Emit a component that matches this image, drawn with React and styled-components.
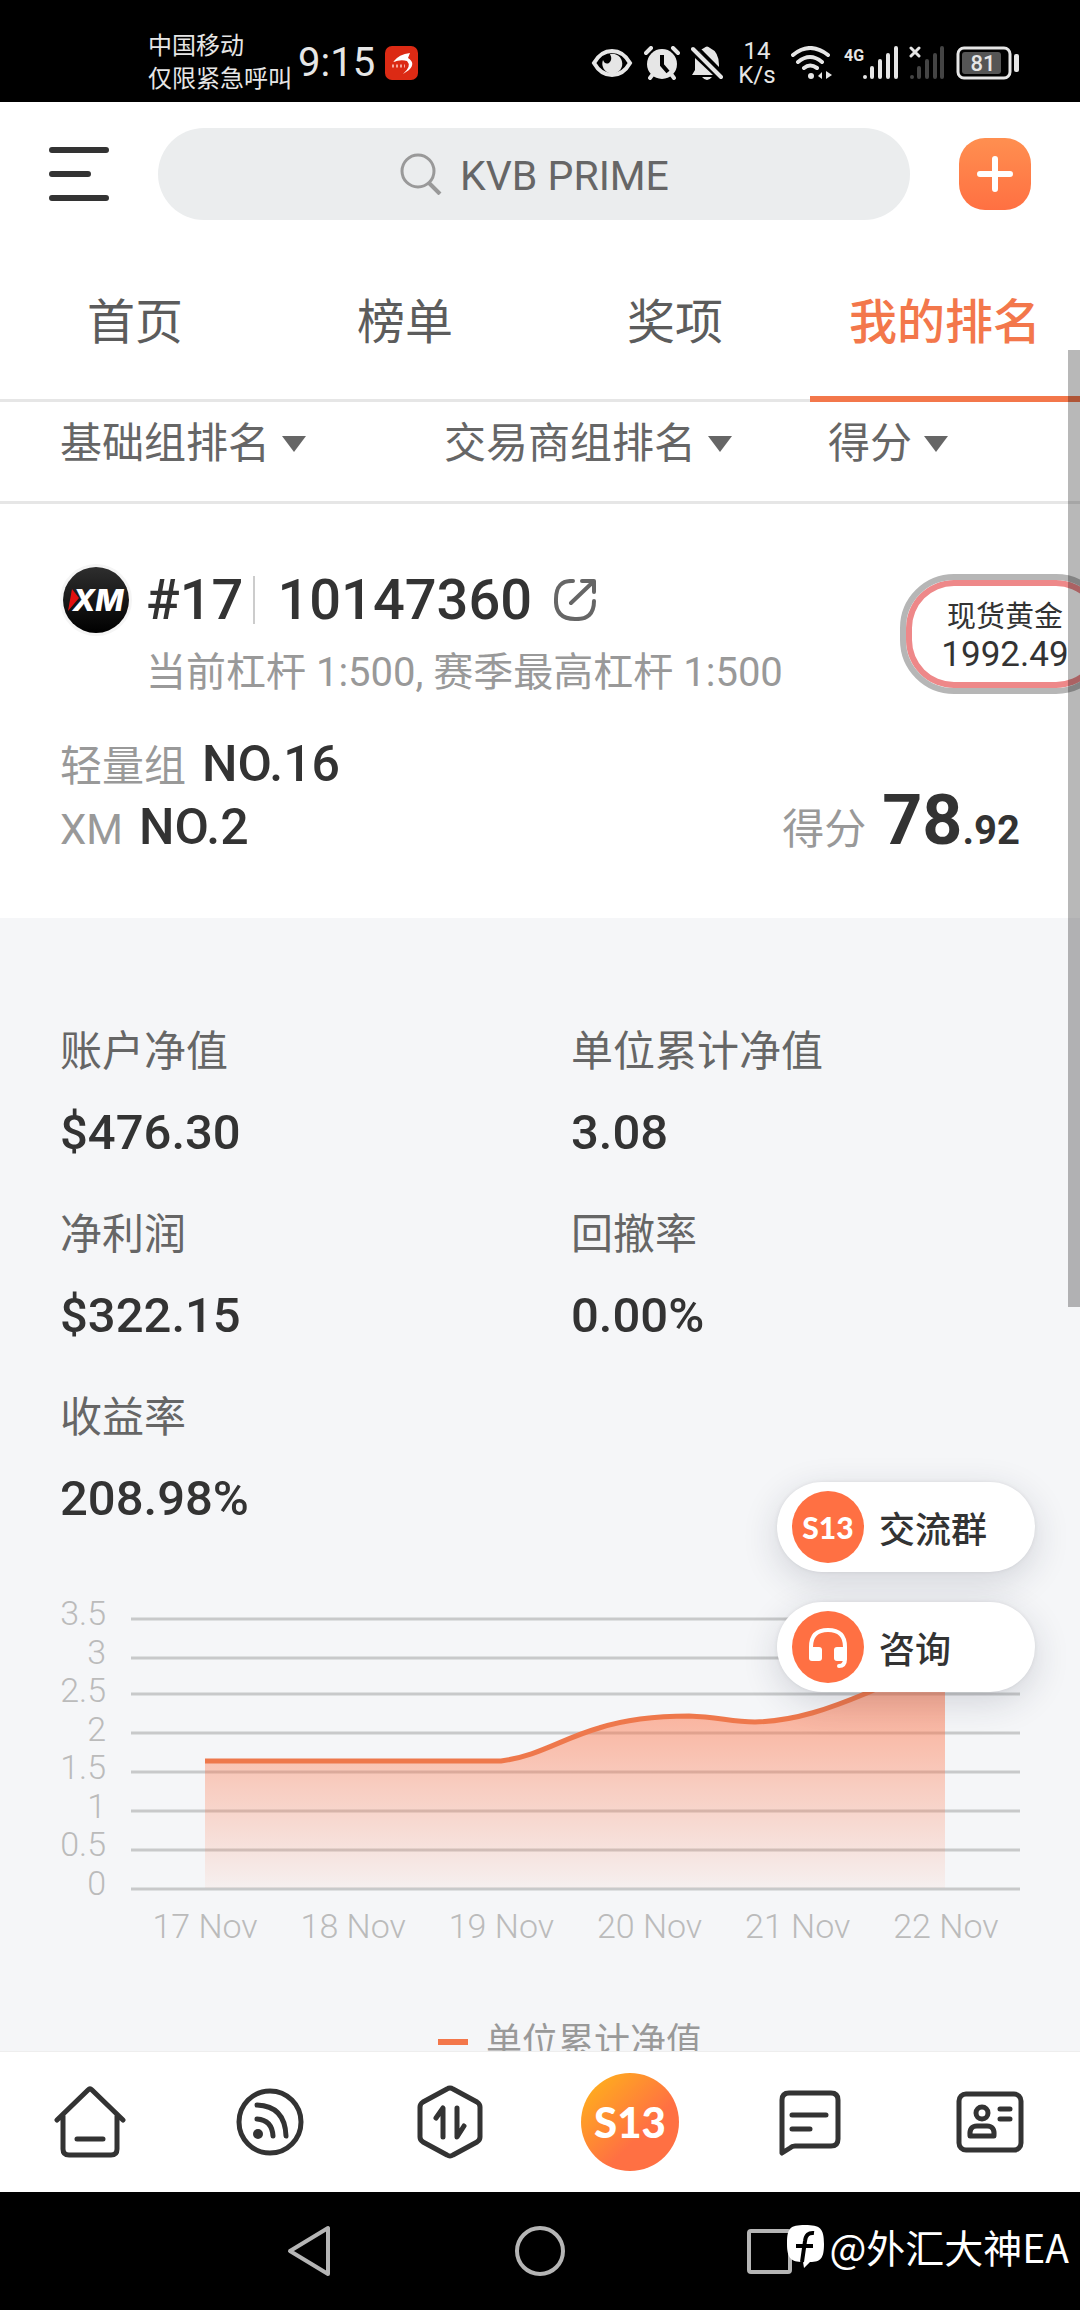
import styled, {createGlobalStyle} from "styled-components";
import {useState} from "react";

const GlobalStyle = createGlobalStyle`
    * {
        box-sizing: border-box;
    }
    body {
        margin: 0;
        background-color: #fff;
        color: #333;
        font-family: Roboto, "Noto Sans CJK SC", sans-serif;
    }
    button, select, input {
        margin: 0;
        padding: 0;
        border: 0;
        outline: 0;
        background: none;
        color: inherit;
        font: inherit;
    }
    svg {
        display: block;
        flex: none;
    }
`

const AppStyle = styled.div`
    position: relative;
    display: flex;
    flex-direction: column;
    height: 100vh;
    overflow: hidden;
`

// status bar of the phone
const StatusBarStyle = styled.div`
    display: flex;
    justify-content: space-between;
    align-items: center;
    height: 102px;
    padding: 24px 60px 0 148px;
    background-color: #000;
    color: #e6e6e6;
`
const StatusGroup = styled.div`
    display: flex;
    align-items: center;
    gap: ${props => props.$gap}px;
`
const Carrier = styled.div`
    font-size: 24px;
    line-height: 33px;
`
const Clock = styled.div`
    font-size: 40px;
    line-height: 40px;
`
const Speed = styled.div`
    width: 38px;
    margin: 0 4px;
    font-size: 24px;
    line-height: 24px;
    text-align: center;
`

// header
const HeaderStyle = styled.header`
    display: flex;
    align-items: center;
    height: 144px;
    padding: 0 49px;
`
const SearchBox = styled.label`
    display: flex;
    flex: 1;
    align-items: center;
    justify-content: center;
    gap: 18px;
    height: 92px;
    margin: 0 49px;
    border-radius: 46px;
    background-color: #ebedee;
`
const SearchInput = styled.input`
    width: 208px;
    padding-top: 4px;
    color: #666;
    font-size: 41px;
    &::placeholder {
        color: #666;
        opacity: 1;
    }
`
const PlusButton = styled.button`
    display: flex;
    align-items: center;
    justify-content: center;
    width: 72px;
    height: 72px;
    border-radius: 26px;
    background: linear-gradient(#ff8f50, #ff7042);
`

const TabsStyle = styled.nav`
    display: grid;
    grid-template-columns: repeat(4, 1fr);
    box-shadow: inset 0 -3px #e6e6e6;
`
const Tab = styled.button`
    height: 156px;
    padding-bottom: 6px;
    border-bottom: 6px solid ${props => props.$active ? "#f3774b" : "transparent"};
    color: ${props => props.$active ? "#f3774b" : "#5c5c5c"};
    font-size: 48px;
    font-weight: ${props => props.$active ? 500 : 400};
`

const FiltersStyle = styled.div`
    display: grid;
    grid-template-columns: 2fr 2fr 1fr;
    padding: 12px 60px 27px;
    border-bottom: 3px solid #e6e6e6;
    color: #666;
`
const FilterStyle = styled.label`
    display: flex;
    align-items: center;
    gap: 10px;
`
const FilterSelect = styled.select`
    appearance: none;
    font-size: 42px;
    line-height: 60px;
`

const MainStyle = styled.main`
    flex: 1;
    min-height: 0;
    overflow: hidden;
    background-color: #f5f6f8;
`

// account card
const CardStyle = styled.section`
    padding: 60px 60px 59px;
    background-color: #fff;
`
const AccountRow = styled.div`
    display: flex;
    align-items: center;
    height: 72px;
    font-size: 56px;
    font-weight: 500;
`
const BrokerLogo = styled.div`
    margin-right: 14px;
    border: 3px solid #f5f5f5;
    border-radius: 50%;
`
const AccountNumber = styled.div`
    margin: 0 22px 0 10px;
    padding-left: 22px;
    border-left: 2px solid #ccc;
    line-height: 48px;
`
const Leverage = styled.div`
    margin: 10px 0 33px 86px;
    color: #999;
    font-size: 40px;
    line-height: 54px;
`
const PlacesRow = styled.div`
    display: flex;
    align-items: last baseline;
    justify-content: space-between;
`
const Place = styled.div`
    display: flex;
    align-items: baseline;
    gap: 16px;
    height: 63px;
    color: #999;
    font-size: 42px;
    line-height: 63px;
`
const PlaceValue = styled.span`
    color: #333;
    font-size: 50px;
    font-weight: 500;
`
const ScoreValue = styled.span`
    color: #333;
    font-size: 40px;
    font-weight: 700;
`
const ScoreWhole = styled.span`
    font-size: 70px;
`

// numbers
const StatsStyle = styled.section`
    display: grid;
    grid-template-columns: 1fr 1fr;
    gap: 42px 62px;
    padding: 104px 60px 0;
`
const Stat = styled.div`
    display: grid;
    gap: 21px;
    line-height: 60px;
`
const StatLabel = styled.div`
    color: #666;
    font-size: 42px;
`
const StatValue = styled.div`
    font-size: 49px;
    font-weight: 500;
`

// chart
const ChartStyle = styled.section`
    display: grid;
    grid-template-columns: 46px 1fr;
    column-gap: 25px;
    padding: 65px 60px 0;
    color: #bbb;
    font-size: 34px;
    font-weight: 300;
    line-height: 38px;
`
const AxisY = styled.div`
    display: flex;
    flex-direction: column;
    justify-content: space-between;
    align-items: flex-end;
    height: 308px;
`
const AxisX = styled.div`
    display: grid;
    grid-column: 2;
    grid-template-columns: repeat(6, 1fr);
    margin-top: 3px;
    text-align: center;
`
const Legend = styled.div`
    display: flex;
    align-items: center;
    justify-content: center;
    gap: 18px;
    padding: 77px 0 0 60px;
    color: #999;
    font-size: 36px;
    line-height: 40px;
`
const LegendMark = styled.span`
    width: 30px;
    height: 6px;
    background-color: #f3774b;
`

// things over the content
const ScrollThumb = styled.div`
    position: absolute;
    top: 350px;
    right: 0;
    width: 12px;
    height: 957px;
    background-color: rgba(0, 0, 0, 0.28);
`
const PriceBadge = styled.div`
    position: absolute;
    top: 574px;
    right: -30px;
    width: 210px;
    height: 120px;
    padding-top: 18px;
    border: 6px solid #b6b6b6;
    border-radius: 54px;
    background-color: #fff;
    box-shadow: inset 0 0 0 6px #ee8889;
    font-size: 29px;
    line-height: 38px;
    text-align: center;
`
const Price = styled.div`
    font-size: 35px;
`
const FloatingStyle = styled.div`
    position: absolute;
    right: 45px;
    bottom: 618px;
    display: grid;
    gap: 30px;
`
const FloatingButton = styled.button`
    display: flex;
    align-items: center;
    gap: 15px;
    width: 258px;
    height: 90px;
    padding-left: 15px;
    border-radius: 45px;
    background-color: #fff;
    box-shadow: 0 10px 36px rgba(30, 40, 60, 0.16), 0 0 4px rgba(0, 0, 0, 0.08);
    font-size: 36px;
    font-weight: 500;
`
const SeasonLogo = styled.span`
    display: flex;
    align-items: center;
    justify-content: center;
    width: ${props => props.$size}px;
    height: ${props => props.$size}px;
    border-radius: 50%;
    background: ${props => props.$gradient ? "linear-gradient(135deg, #ffb31a 5%, #ff7043 62%)" : "#ff7043"};
    color: #fff;
    font-family: Lato, sans-serif;
    font-size: ${props => props.$gradient ? 42 : 30}px;
    font-weight: 900;
`

const BottomNavStyle = styled.nav`
    display: grid;
    grid-template-columns: repeat(6, 1fr);
    height: 141px;
    border-top: 1px solid #eee;
    background-color: #fff;
`
const NavButton = styled.button`
    display: flex;
    align-items: center;
    justify-content: center;
`
const SystemNavStyle = styled.nav`
    position: relative;
    display: flex;
    align-items: center;
    justify-content: center;
    gap: 180px;
    height: 118px;
    background-color: #000;
`
const Watermark = styled.div`
    position: absolute;
    top: 28px;
    right: 11px;
    display: flex;
    align-items: center;
    gap: 5px;
    color: #fff;
    font-family: "Noto Sans CJK SC", sans-serif;
    font-size: 39px;
    line-height: 52px;
`

const tabs = ["首页", "榜单", "奖项", "我的排名"];
const filters = ["基础组排名", "交易商组排名", "得分"];
const stats = [
    {label: "账户净值", value: "$476.30"},
    {label: "单位累计净值", value: "3.08"},
    {label: "净利润", value: "$322.15"},
    {label: "回撤率", value: "0.00%"},
    {label: "收益率", value: "208.98%"},
];
const levels = ["3.5", "3", "2.5", "2", "1.5", "1", "0.5", "0"];
const days = ["17 Nov", "18 Nov", "19 Nov", "20 Nov", "21 Nov", "22 Nov"];
const curve = "M74 167H370C408 162 430 145 468 134C496 125 526 122 558 122C588 123 600 128 624 128C665 127 700 114 736 99C764 87 789 68 814 57";

function StatusIcons() {
    return (
        <>
            <svg width="42" height="34" viewBox="0 0 42 34">
                <path d="M3 17C12 1 30 1 39 17C30 33 12 33 3 17Z" fill="none" stroke="#e6e6e6" strokeWidth="4" />
                <path d="M19 8A10 10 0 1 1 12 14Q14 19 18 17Q22 14 19 8Z" fill="#e6e6e6" />
            </svg>
            <svg width="36" height="34" viewBox="0 0 36 34">
                <circle cx="18" cy="18" r="15" fill="#e6e6e6" />
                <path d="M2 7L7 2M34 7L29 2M6 32L9 28M30 32L27 28" stroke="#e6e6e6" strokeWidth="4" strokeLinecap="round" />
                <path d="M18 9V19L24 26" fill="none" stroke="#000" strokeWidth="4" />
            </svg>
            <svg width="32" height="34" viewBox="0 0 32 34">
                <path d="M1 29L4 24V12L22 29ZM8 5Q11 3 13 2Q16-1 19 2Q28 6 28 19V22ZM11 31H21Q16 37 11 31Z" fill="#e6e6e6" />
                <path d="M2 3L30 31" stroke="#e6e6e6" strokeWidth="4" strokeLinecap="round" />
                <path d="M6 1L32 27" stroke="#000" strokeWidth="3" />
            </svg>
        </>
    );
}

function SignalIcons() {
    return (
        <>
            <svg width="42" height="34" viewBox="0 0 42 34" fill="none" stroke="#e6e6e6" strokeWidth="4" strokeLinecap="round">
                <path d="M2 9Q19-5 37 9M7 16Q19 6 31 16M13 22Q19 17 26 22" />
                <circle cx="20" cy="30" r="3" fill="#e6e6e6" stroke="none" />
                <path d="M31 26V33L27 30ZM35 33V25L41 29Z" fill="#e6e6e6" stroke="none" />
            </svg>
            <svg width="54" height="34" viewBox="0 0 54 34">
                <text x="0" y="15" fill="#e6e6e6" fontSize="16" fontWeight="700">4G</text>
                <path d="M21 31V31M28 22V31M36 15V31M44 9V31M52 2V31" stroke="#e6e6e6" strokeWidth="4" strokeLinecap="round" />
            </svg>
            <svg width="36" height="34" viewBox="0 0 36 34" strokeWidth="4" strokeLinecap="round">
                <path d="M3 31V31M10 22V31M18 15V31M26 9V31M33 2V31" stroke="#444" />
                <path d="M2 2L10 10M10 2L2 10" stroke="#e6e6e6" strokeWidth="3" />
            </svg>
            <svg width="64" height="34" viewBox="0 0 64 34">
                <rect x="2" y="2" width="52" height="30" rx="6" fill="none" stroke="#e6e6e6" strokeWidth="3" />
                <rect x="6" y="6" width="39" height="22" rx="3" fill="#555" />
                <rect x="58" y="8" width="5" height="18" rx="2" fill="#e6e6e6" />
                <text x="27" y="25" fill="#e6e6e6" fontSize="22" fontWeight="500" textAnchor="middle">81</text>
            </svg>
        </>
    );
}

function StatusBar() {
    return (
        <StatusBarStyle>
            <StatusGroup $gap={6}>
                <Carrier>中国移动<br />仅限紧急呼叫</Carrier>
                <Clock>9:15</Clock>
                <svg width="38" height="34" viewBox="0 0 38 34">
                    <rect x="4" width="33" height="34" rx="7" fill="#dc2a14" />
                    <path d="M12 16Q18 8 29 7L27 12Q35 17 28 24L22 28Q31 20 26 15Q20 13 12 16Z" fill="#fff" />
                    <path d="M11 20H24" stroke="#f6a89c" strokeWidth="3" strokeDasharray="2 2" />
                </svg>
            </StatusGroup>
            <StatusGroup $gap={11}>
                <StatusIcons />
                <Speed>14<br />K/s</Speed>
                <SignalIcons />
            </StatusGroup>
        </StatusBarStyle>
    );
}

function Header() {
    return (
        <HeaderStyle>
            <button aria-label="菜单">
                <svg width="60" height="54" viewBox="0 0 60 54" stroke="#333" strokeWidth="6" strokeLinecap="round">
                    <path d="M3 3H57M3 27H39M3 51H57" />
                </svg>
            </button>
            <SearchBox>
                <svg width="42" height="42" viewBox="0 0 42 42" fill="none" stroke="#999" strokeWidth="3">
                    <circle cx="18" cy="18" r="16" />
                    <path d="M29 30L40 41" strokeWidth="4" />
                </svg>
                <SearchInput type="text" aria-label="搜索" placeholder="KVB PRIME" />
            </SearchBox>
            <PlusButton aria-label="添加">
                <svg width="36" height="36" viewBox="0 0 36 36" stroke="#fff" strokeWidth="6" strokeLinecap="round">
                    <path d="M3 18H33M18 3V33" />
                </svg>
            </PlusButton>
        </HeaderStyle>
    );
}

function AccountCard() {
    return (
        <CardStyle>
            <AccountRow>
                <BrokerLogo>
                    <svg width="66" height="66" viewBox="0 0 66 66">
                        <defs>
                            <linearGradient id="xm" x2="0" y2="1">
                                <stop stopColor="#2e2e2e" />
                                <stop offset="1" stopColor="#000" />
                            </linearGradient>
                        </defs>
                        <circle cx="33" cy="33" r="33" fill="url(#xm)" />
                        <path d="M9 22L16 31L5 44Z" fill="#e01010" />
                        <text x="35" y="44" fill="#fff" fontFamily="Inter" fontSize="30" fontWeight="800" fontStyle="italic" textAnchor="middle">XM</text>
                    </svg>
                </BrokerLogo>
                #17
                <AccountNumber>10147360</AccountNumber>
                <button aria-label="分享">
                    <svg width="42" height="42" viewBox="0 0 42 42" fill="none" stroke="#666" strokeWidth="4" strokeLinecap="round" strokeLinejoin="round">
                        <path d="M19 2Q2 1 2 20Q1 40 21 40Q40 41 40 22M28 2H40V13M39 3L17 24" />
                    </svg>
                </button>
            </AccountRow>
            <Leverage>当前杠杆 1:500, 赛季最高杠杆 1:500</Leverage>
            <PlacesRow>
                <div>
                    <Place>轻量组 <PlaceValue>NO.16</PlaceValue></Place>
                    <Place>XM <PlaceValue>NO.2</PlaceValue></Place>
                </div>
                <Place>得分 <ScoreValue><ScoreWhole>78</ScoreWhole>.92</ScoreValue></Place>
            </PlacesRow>
        </CardStyle>
    );
}

function Chart() {
    return (
        <>
            <ChartStyle>
                <AxisY>
                    {levels.map(level => <span key={level}>{level}</span>)}
                </AxisY>
                <svg width="100%" height="310" viewBox="0 0 889 310" preserveAspectRatio="none">
                    <defs>
                        <linearGradient id="area" x2="0" y2="1">
                            <stop stopColor="#ff7043" stopOpacity="0.65" />
                            <stop offset="1" stopColor="#ff7043" stopOpacity="0.05" />
                        </linearGradient>
                    </defs>
                    <path d="M0 25H889M0 64H889M0 100H889M0 139H889M0 178H889M0 217H889M0 256H889M0 295H889" stroke="#c8c9ca" strokeWidth="3" />
                    <path d={curve + "V294H74Z"} fill="url(#area)" />
                    <path d={curve} fill="none" stroke="#ee784c" strokeWidth="5" />
                </svg>
                <AxisX>
                    {days.map(day => <span key={day}>{day}</span>)}
                </AxisX>
            </ChartStyle>
            <Legend><LegendMark />单位累计净值</Legend>
        </>
    );
}

function BottomNav() {
    const line = {fill: "none", stroke: "#333", strokeWidth: 5, strokeLinecap: "round", strokeLinejoin: "round"};
    return (
        <BottomNavStyle>
            <NavButton aria-label="主页">
                <svg width="72" height="72" viewBox="0 0 72 72" {...line}>
                    <path d="M3 34L34 4Q36 2 38 4L69 34M9 30V63Q9 69 15 69H57Q63 69 63 63V30M23 53H49" />
                </svg>
            </NavButton>
            <NavButton aria-label="动态">
                <svg width="72" height="72" viewBox="0 0 72 72" {...line}>
                    <circle cx="36" cy="36" r="31" />
                    <path d="M23 19Q51 20 52 50M23 33Q38 34 39 50" />
                    <circle cx="24" cy="48" r="5" fill="#333" stroke="none" />
                </svg>
            </NavButton>
            <NavButton aria-label="交易">
                <svg width="72" height="76" viewBox="0 0 72 76" {...line}>
                    <path d="M33 5Q36 3 39 5L63 18Q66 20 66 23V53Q66 56 63 58L39 71Q36 73 33 71L9 58Q6 56 6 53V23Q6 20 9 18Z" />
                    <path d="M22 34L29 24V53M43 24V53L50 42" />
                </svg>
            </NavButton>
            <NavButton aria-label="赛季">
                <SeasonLogo $size={98} $gradient>S13</SeasonLogo>
            </NavButton>
            <NavButton aria-label="消息">
                <svg width="64" height="72" viewBox="0 0 64 72" {...line}>
                    <path d="M4 67V14Q4 7 11 7H53Q60 7 60 14V53Q60 60 53 60H17Q14 60 12 62Z M14 29H48M14 43H32" />
                </svg>
            </NavButton>
            <NavButton aria-label="我的">
                <svg width="72" height="72" viewBox="0 0 72 72" {...line}>
                    <rect x="5" y="8" width="62" height="56" rx="7" />
                    <circle cx="28" cy="27" r="6" />
                    <path d="M16 50Q15 40 23 40H33Q41 40 40 50ZM46 23H56M46 33H56" />
                </svg>
            </NavButton>
        </BottomNavStyle>
    );
}

function SystemNav() {
    return (
        <SystemNavStyle>
            <NavButton aria-label="返回">
                <svg width="50" height="52" viewBox="0 0 50 52" fill="none" stroke="#b5b5b5" strokeWidth="4" strokeLinejoin="round">
                    <path d="M6 26L44 3V49Z" />
                </svg>
            </NavButton>
            <NavButton aria-label="桌面">
                <svg width="52" height="52" viewBox="0 0 52 52" fill="none" stroke="#b5b5b5" strokeWidth="4">
                    <circle cx="26" cy="26" r="23" />
                </svg>
            </NavButton>
            <NavButton aria-label="最近">
                <svg width="50" height="52" viewBox="0 0 50 52" fill="none" stroke="#b5b5b5" strokeWidth="4">
                    <rect x="3" y="6" width="41" height="41" rx="2" />
                </svg>
            </NavButton>
            <Watermark>
                <svg width="37" height="44" viewBox="0 0 37 44">
                    <path d="M18 1C33 1 37 4 37 20C37 34 34 38 23 38L17 44L16 38C4 38 0 34 0 20C0 4 3 1 18 1Z" fill="#fff" />
                    <path d="M27 9Q19 8 18 17L15 38M9 22H26" fill="none" stroke="#000" strokeWidth="4" />
                </svg>
                @外汇大神EA
            </Watermark>
        </SystemNavStyle>
    );
}

function App() {
    const [activeTab, setActiveTab] = useState("我的排名");

    return (
        <AppStyle>
            <GlobalStyle />
            <StatusBar />
            <Header />
            <TabsStyle>
                {tabs.map(tab => (
                    <Tab key={tab} $active={tab === activeTab} onClick={() => setActiveTab(tab)}>{tab}</Tab>
                ))}
            </TabsStyle>
            <FiltersStyle>
                {filters.map(name => (
                    <FilterStyle key={name}>
                        <FilterSelect aria-label={name}>
                            <option>{name}</option>
                        </FilterSelect>
                        <svg width="26" height="16" viewBox="0 0 26 16"><path d="M1 0H25L13 16Z" fill="#666" /></svg>
                    </FilterStyle>
                ))}
            </FiltersStyle>
            <MainStyle>
                <AccountCard />
                <StatsStyle>
                    {stats.map(stat => (
                        <Stat key={stat.label}>
                            <StatLabel>{stat.label}</StatLabel>
                            <StatValue>{stat.value}</StatValue>
                        </Stat>
                    ))}
                </StatsStyle>
                <Chart />
            </MainStyle>
            <BottomNav />
            <SystemNav />
            <PriceBadge>
                现货黄金
                <Price>1992.49</Price>
            </PriceBadge>
            <FloatingStyle>
                <FloatingButton>
                    <SeasonLogo $size={72}>S13</SeasonLogo>
                    交流群
                </FloatingButton>
                <FloatingButton>
                    <svg width="72" height="72" viewBox="0 0 72 72">
                        <circle cx="36" cy="36" r="36" fill="#ff7043" />
                        <path d="M19 40V36Q19 19 36 19Q53 19 53 36V48Q53 55 47 55" fill="none" stroke="#fff" strokeWidth="4" strokeLinecap="round" />
                        <rect x="17" y="36" width="13" height="14" rx="3" fill="#fff" />
                        <rect x="42" y="36" width="13" height="14" rx="3" fill="#fff" />
                    </svg>
                    咨询
                </FloatingButton>
            </FloatingStyle>
            <ScrollThumb />
        </AppStyle>
    );
}

export default App;
